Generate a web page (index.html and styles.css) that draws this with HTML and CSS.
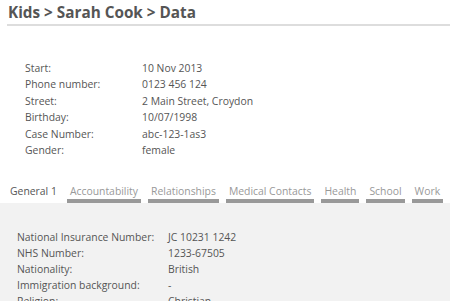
FILE: index.html
```html
<!DOCTYPE html>
<html>
<head>
<meta charset="utf-8">
<link rel="stylesheet" href="styles.css">
</head>
<body>
<div class="page">
  <h1 class="title">Kids &gt; Sarah Cook &gt; Data</h1>
  <div class="info">
    <div class="row"><span class="lbl">Start:</span><span class="val">10 Nov 2013</span></div>
    <div class="row"><span class="lbl">Phone number:</span><span class="val">0123 456 124</span></div>
    <div class="row"><span class="lbl">Street:</span><span class="val">2 Main Street, Croydon</span></div>
    <div class="row"><span class="lbl">Birthday:</span><span class="val">10/07/1998</span></div>
    <div class="row"><span class="lbl">Case Number:</span><span class="val">abc-123-1as3</span></div>
    <div class="row"><span class="lbl">Gender:</span><span class="val">female</span></div>
  </div>
  <div class="tabs">
    <span class="tab active">General 1</span>
    <span class="tab">Accountability</span>
    <span class="tab">Relationships</span>
    <span class="tab">Medical Contacts</span>
    <span class="tab">Health</span>
    <span class="tab">School</span>
    <span class="tab">Work</span>
  </div>
  <div class="panel">
    <div class="row2"><span class="lbl2">National Insurance Number:</span><span class="val">JC 10231 1242</span></div>
    <div class="row2"><span class="lbl2">NHS Number:</span><span class="val">1233-67505</span></div>
    <div class="row2"><span class="lbl2">Nationality:</span><span class="val">British</span></div>
    <div class="row2"><span class="lbl2">Immigration background:</span><span class="val">-</span></div>
    <div class="row2"><span class="lbl2">Religion:</span><span class="val">Christian</span></div>
  </div>
</div>
</body>
</html>
```
FILE: styles.css
```css
html, body {
  margin: 0;
  padding: 0;
  background: #fff;
  overflow: hidden;
  height: 301px;
}
.page {
  padding-left: 7px;
  font-family: "Open Sans", "Noto Sans", sans-serif;
  font-size: 10.4px;
  color: #555;
}
.title {
  margin: 0;
  padding: 2px 0 2px 1px;
  font-size: 15.3px;
  font-weight: bold;
  color: #555;
  line-height: 20px;
  border-bottom: 2px solid #ddd;
}
.info {
  padding: 34px 0 0 18px;
}
.row, .row2 {
  display: flex;
  height: 16.4px;
  line-height: 16px;
  white-space: nowrap;
}
.lbl {
  width: 117px;
}
.tabs {
  display: flex;
  gap: 7px;
  margin-top: 26px;
}
.tab {
  padding: 0 3px;
  line-height: 15px;
  color: #999;
  border-bottom: 4px solid #999;
  white-space: nowrap;
}
.tab.active {
  color: #555;
  border-bottom-color: #fff;
  background: #fff;
}
.panel {
  background: #f2f2f2;
  margin-left: -7px;
  padding: 26px 0 0 17px;
  height: 120px;
}
.row2 {
  height: 16px;
}
.lbl2 {
  width: 151px;
}
```
